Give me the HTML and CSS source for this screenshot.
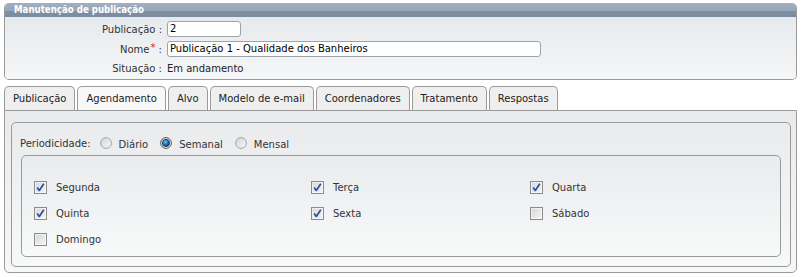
FILE: index.html
```html
<!DOCTYPE html>
<html lang="pt-BR">
<head>
<meta charset="utf-8">
<title>Manutenção de publicação</title>
<link rel="stylesheet" href="styles.css">
</head>
<body>
<svg class="defs" width="0" height="0" aria-hidden="true">
  <defs>
    <linearGradient id="boxg" x1="0" y1="0" x2="1" y2="1">
      <stop offset="0" stop-color="#d4d6d8"/>
      <stop offset="1" stop-color="#f6f6f6"/>
    </linearGradient>
    <linearGradient id="radg" x1="0" y1="0" x2="1" y2="1">
      <stop offset="0" stop-color="#cfd2d5"/>
      <stop offset="1" stop-color="#fafafa"/>
    </linearGradient>
    <radialGradient id="dotg" cx="0.4" cy="0.35" r="0.7">
      <stop offset="0" stop-color="#7cc4f0"/>
      <stop offset="0.45" stop-color="#1c7fc8"/>
      <stop offset="1" stop-color="#0b3f78"/>
    </radialGradient>
    <symbol id="cb" viewBox="0 0 13 13">
      <rect x="0.5" y="0.5" width="12" height="12" fill="url(#boxg)" stroke="#8c8c8c"/>
      <rect x="1.5" y="1.5" width="10" height="10" fill="none" stroke="#ffffff" stroke-opacity="0.55"/>
    </symbol>
    <symbol id="cbc" viewBox="0 0 13 13">
      <rect x="0.5" y="0.5" width="12" height="12" fill="url(#boxg)" stroke="#8c8c8c"/>
      <rect x="1.5" y="1.5" width="10" height="10" fill="none" stroke="#ffffff" stroke-opacity="0.55"/>
      <path d="M3.2 6.4 L5.3 9.4 L9.8 2.8" fill="none" stroke="#2d4c9c" stroke-width="1.7" stroke-linejoin="round"/>
    </symbol>
    <symbol id="rd" viewBox="0 0 12 12">
      <circle cx="6" cy="6" r="5.4" fill="url(#radg)" stroke="#a3a6a9"/>
    </symbol>
    <symbol id="rdc" viewBox="0 0 12 12">
      <circle cx="6" cy="6" r="5.4" fill="url(#radg)" stroke="#55595d"/>
      <circle cx="6" cy="6" r="3.6" fill="url(#dotg)" stroke="#1b2d44" stroke-width="0.8"/>
    </symbol>
  </defs>
</svg>

<div class="panel">
  <div class="panel-head">Manutenção de publicação</div>
  <div class="panel-body">
    <div class="form">
      <label class="lbl">Publicação :</label>
      <div class="field"><span class="input short">2</span></div>
      <label class="lbl">Nome<span class="req">*</span> :</label>
      <div class="field"><span class="input long">Publicação 1 - Qualidade dos Banheiros</span></div>
      <label class="lbl">Situação :</label>
      <div class="field value">Em andamento</div>
    </div>
  </div>
</div>

<div class="tabs">
  <ul class="tab-list">
    <li class="tab">Publicação</li>
    <li class="tab active">Agendamento</li>
    <li class="tab">Alvo</li>
    <li class="tab">Modelo de e-mail</li>
    <li class="tab">Coordenadores</li>
    <li class="tab">Tratamento</li>
    <li class="tab">Respostas</li>
  </ul>
  <div class="tab-panel">
    <div class="fieldset">
      <div class="period">
        <span class="period-lbl">Periodicidade:</span>
        <span class="opt"><svg class="radio"><use href="#rd"/></svg><span class="opt-text">Diário</span></span>
        <span class="opt"><svg class="radio"><use href="#rdc"/></svg><span class="opt-text">Semanal</span></span>
        <span class="opt"><svg class="radio"><use href="#rd"/></svg><span class="opt-text">Mensal</span></span>
      </div>
      <div class="days">
        <span class="day"><svg class="check"><use href="#cbc"/></svg>Segunda</span>
        <span class="day"><svg class="check"><use href="#cbc"/></svg>Terça</span>
        <span class="day"><svg class="check"><use href="#cbc"/></svg>Quarta</span>
        <span class="day"><svg class="check"><use href="#cbc"/></svg>Quinta</span>
        <span class="day"><svg class="check"><use href="#cbc"/></svg>Sexta</span>
        <span class="day"><svg class="check"><use href="#cb"/></svg>Sábado</span>
        <span class="day"><svg class="check"><use href="#cb"/></svg>Domingo</span>
      </div>
    </div>
  </div>
</div>
</body>
</html>
```

FILE: styles.css
```css
* { box-sizing: border-box; }

html, body {
  margin: 0;
  padding: 0;
  background: #ffffff;
}

body {
  font-family: "DejaVu Sans", Verdana, sans-serif;
  font-size: 10px;
  color: #333;
  width: 802px;
  height: 277px;
  overflow: hidden;
}

.defs {
  position: absolute;
  width: 0;
  height: 0;
}

/* ---- Top panel ---- */
.panel {
  margin: 3px 5px 0 4px;
  border: 1px solid #9a9a9a;
  border-top: none;
  border-radius: 5px;
  overflow: hidden;
}

.panel-head {
  height: 14px;
  line-height: 14px;
  padding-left: 9px;
  color: #ffffff;
  font-family: "DejaVu Sans Condensed", "DejaVu Sans", sans-serif;
  font-weight: bold;
  font-size: 9.6px;
  background: linear-gradient(#a1afbe 0%, #97a7b8 55%, #7d8fa3 60%, #7a8ca0 100%);
}

.panel-body {
  background: linear-gradient(#e7eaed, #f5f6f7);
  padding: 4px 0 4px 0;
}

.form {
  display: grid;
  grid-template-columns: 158px 1fr;
  grid-template-rows: 16px 16px 14px;
  column-gap: 4px;
  row-gap: 4px;
  align-items: center;
}

.lbl {
  text-align: right;
  color: #333;
  padding-right: 1px;
}

.req {
  color: #e21b1b;
  position: relative;
  top: -2px;
  margin-left: 1px;
}

.input {
  display: block;
  height: 16px;
  line-height: 14px;
  border: 1px solid #9ba3ab;
  border-radius: 3px;
  background: #ffffff;
  color: #000;
  padding-left: 2px;
  white-space: nowrap;
  overflow: hidden;
}

.input.short { width: 74px; }
.input.long { width: 374px; }

.value { color: #222; }

/* ---- Tabs ---- */
.tabs {
  margin: 6px 5px 0 4px;
}

.tab-list {
  list-style: none;
  margin: 0;
  padding: 0;
  display: flex;
  gap: 2px;
  align-items: flex-end;
}

.tab {
  height: 24px;
  line-height: 23px;
  padding: 0 8px;
  border: 1px solid #9a9a9a;
  border-bottom: none;
  border-radius: 5px 5px 0 0;
  background: #efefef;
  color: #222;
  white-space: nowrap;
}

.tab.active {
  background: #f8f8f8;
}

.tab-panel {
  border: 1px solid #9a9a9a;
  border-radius: 0 0 5px 5px;
  background: linear-gradient(#e8eaec, #f6f7f7);
  padding: 11px 5px 5px 6px;
  height: 163px;
}

.fieldset {
  border: 1px solid #9a9a9a;
  border-radius: 5px;
  padding: 12px 9px 9px 9px;
  background: linear-gradient(#e9ebed, #f7f8f8);
}

.period {
  display: flex;
  align-items: center;
  height: 16px;
  padding-left: 0;
  margin-left: -1px;
}

.period-lbl {
  color: #333;
  margin-right: 9px;
}

.opt {
  display: inline-flex;
  align-items: center;
  margin-right: 12px;
}

.radio {
  width: 12px;
  height: 12px;
  flex: none;
}

.opt-text {
  margin-left: 7px;
  position: relative;
  top: 1px;
  color: #333;
}

.days {
  margin-top: 4px;
  border: 1px solid #9a9a9a;
  border-radius: 5px;
  background: linear-gradient(#e9ebed, #f8f9f9);
  padding: 23px 0 9px 12px;
  display: grid;
  grid-template-columns: 277px 219px 1fr;
  grid-auto-rows: 16px;
  row-gap: 10px;
}

.day {
  display: flex;
  align-items: center;
  color: #333;
}

.check {
  width: 13px;
  height: 13px;
  flex: none;
  margin-right: 9px;
}
```
